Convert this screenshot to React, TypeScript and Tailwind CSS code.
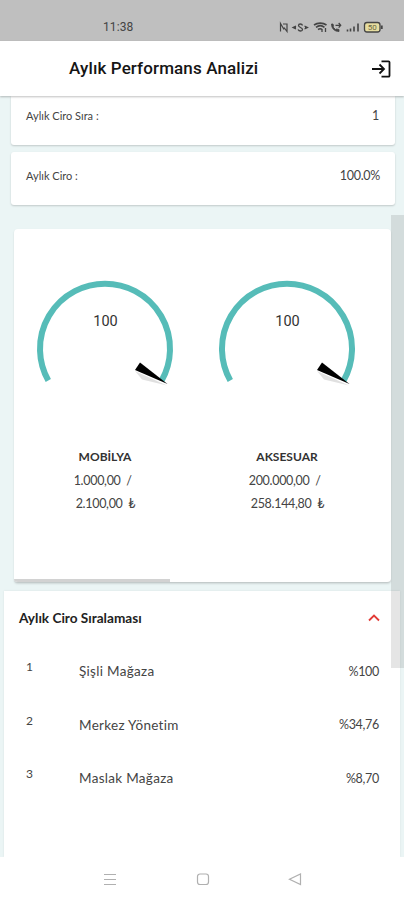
interface Gauge {
  label: string;
  value: number;
  current: string;
  target: string;
}

interface Store {
  rank: number;
  name: string;
  share: string;
}

const gauges: Gauge[] = [
  { label: "MOBİLYA", value: 100, current: "1.000,00", target: "2.100,00" },
  { label: "AKSESUAR", value: 100, current: "200.000,00", target: "258.144,80" },
];

const stores: Store[] = [
  { rank: 1, name: "Şişli Mağaza", share: "%100" },
  { rank: 2, name: "Merkez Yönetim", share: "%34,76" },
  { rank: 3, name: "Maslak Mağaza", share: "%8,70" },
];

export default function App() {
  return (
    <div className="relative flex h-[900px] w-[404px] flex-col overflow-hidden bg-[#ebf5f5] font-['Lato','Noto_Sans',sans-serif] text-[#444]">
      <StatusBar />
      <Header />

      <main className="flex h-[761px] flex-col">
        <SummaryCard label="Aylık Ciro Sıra :" value="1" className="h-[49px] rounded-b-[3px] pr-4 pb-[9px]" />
        <SummaryCard label="Aylık Ciro :" value="100.0%" className="mt-[7px] h-[53px] rounded-[3px] pr-[15px] pb-[5px]" />

        {/* Gauges */}
        <section className="mt-6 ml-[14px] flex h-[354px] w-[377px] flex-col overflow-hidden rounded-[4px] border-b border-[#c3cbcb] bg-white shadow-[0_1px_2px_rgba(0,0,0,0.12)]">
          <div className="flex flex-1">
            {gauges.map((gauge) => (
              <GaugePanel key={gauge.label} gauge={gauge} />
            ))}
          </div>
          <div className="h-[3px] w-[156px] bg-[#d2d2d2]" />
        </section>

        <Ranking />
      </main>

      <NavBar />

      {/* Page scrollbar thumb */}
      <div className="absolute top-[215px] right-0 h-[453px] w-[13px] bg-black/10" />
    </div>
  );
}

function StatusBar() {
  return (
    <div className="flex h-[41px] shrink-0 items-start justify-between bg-[#bfbfbf] pt-[19px] pr-[20px] pl-[103px] text-[#444]">
      <span className="font-['Roboto',sans-serif] text-[12px] leading-[17px] tracking-[0.1px]">11:38</span>
      <svg width="106" height="16" viewBox="278 19 106 16" fill="none" stroke="#444" strokeWidth="1.3">
        {/* NFC */}
        <path d="M280.500 31.500v-8l3.500 6M283 24h4v7.500l-3-4" strokeWidth="1.200" />
        {/* Vibrate */}
        <path d="M296 26l-3 1.500 3 1.500M304.500 26l3 1.500-3 1.500M294 27.500h2M305 27.500h2" />
        <path d="M302.500 25.500c-.5-2-4-2-4 0s4 2 4 4-3.500 2-4.500 0" />
        {/* Wi-Fi */}
        <path d="M314 25c3.500-2.500 9-2.500 12.500 0M316 27.300c2.500-2 6-2 8.500 0M318 29.500c1.500-1 3-1 4 0" strokeWidth="1.600" />
        <path d="M322 29v3M325.500 28v4" />
        {/* Call */}
        <path d="M331.500 24c0 4.500 3 7.500 7.500 7.500v-2l-2.500-.500-1 .500-2.500-2.500.500-1-.5-2z" fill="#444" strokeWidth="0.800" />
        <path d="M335.500 25.300h5M338.700 23l2 2.300-2 2.300" />
        {/* Signal */}
        <path d="M347.500 31.500v-2M350.500 31.500v-3M354 31.500v-5M358 31.500v-8" strokeWidth="1.600" />
        {/* Battery */}
        <rect x="364.500" y="22.500" width="15.500" height="9.500" rx="2.500" fill="#e6dda0" />
        <path d="M381.800 25.500v3.500" strokeWidth="1.800" />
        <text
          x="372.300"
          y="30"
          textAnchor="middle"
          fill="#6b6540"
          stroke="none"
          className="font-['Roboto',sans-serif] text-[8px]"
        >
          50
        </text>
      </svg>
    </div>
  );
}

function Header() {
  return (
    <header className="z-10 flex h-[55px] shrink-0 items-center justify-between bg-white pr-[11px] pl-[69px] shadow-[0_1px_2px_rgba(0,0,0,0.25)]">
      <h1 className="font-['Roboto',sans-serif] text-[17px] font-medium tracking-[0.12px] whitespace-nowrap text-[#151515]">
        Aylık Performans Analizi
      </h1>
      <svg width="22" height="20" viewBox="0 0 22 20" fill="none" stroke="#111" strokeWidth="1.800">
        <path d="M1 10h12M8.500 5.500 13 10l-4.500 4.500" />
        <path d="M10.500 2.300H17.500a1 1 0 0 1 1 1v13.400a1 1 0 0 1-1 1h-7" />
      </svg>
    </header>
  );
}

function SummaryCard({ label, value, className }: { label: string; value: string; className: string }) {
  return (
    <div
      className={`mx-[11px] flex w-[384px] shrink-0 items-center justify-between bg-white pl-[15px] shadow-[0_1px_2px_rgba(0,0,0,0.18)] ${className}`}
    >
      <span className="text-[11px]">{label}</span>
      <span className="text-[12.500px] tracking-[-0.3px]">{value}</span>
    </div>
  );
}

function GaugePanel({ gauge }: { gauge: Gauge }) {
  return (
    <div className="flex w-[182px] shrink-0 flex-col items-center pt-[41px]">
      <svg width="150" height="130" viewBox="0 0 150 130">
        <path d="M18.300 110.500A65 65 0 1 1 131.700 110.500" fill="none" stroke="#56bcb8" strokeWidth="6" />
        <path d="M105 101l32 14.500-25-6z" fill="#000" opacity="0.120" />
        <path d="M110 92.500l27.500 21.500L105 100z" fill="#000" />
        <text
          x="75.500"
          y="55.500"
          textAnchor="middle"
          fill="#333"
          className="font-['Roboto',sans-serif] text-[14.500px]"
        >
          {gauge.value}
        </text>
      </svg>
      <p className="mt-[46px] text-[12px] leading-[22px] font-bold text-[#333]">{gauge.label}</p>
      <div className="pt-px text-[12.500px] leading-[23px] tracking-[-0.3px] whitespace-pre">
        <p className="-ml-px">{gauge.current}{"  /"}</p>
        <p className="pl-px">{gauge.target}{"  ₺"}</p>
      </div>
    </div>
  );
}

function Ranking() {
  return (
    <section className="mx-1 mt-2 flex-1 bg-white pr-[21px] pl-[15px] shadow-[0_0_2px_rgba(0,0,0,0.08)]">
      <div className="flex h-[54px] items-center justify-between">
        <h2 className="text-[13.600px] font-bold text-[#222]">Aylık Ciro Sıralaması</h2>
        <svg width="12" height="8" viewBox="0 0 12 8" fill="none" stroke="#e23b36" strokeWidth="1.800" className="-mr-px">
          <path d="M1 6.500l5-5 5 5" />
        </svg>
      </div>
      <ul>
        {stores.map((store) => (
          <li key={store.rank} className="flex h-[53.500px] items-center pl-[7px] text-[13.500px]">
            <span className="w-[53px] pb-[9px] text-[12px]">{store.rank}</span>
            <span className="flex-1 pb-px tracking-[0.3px] [font-variant-ligatures:none]">{store.name}</span>
            <span className="pt-px text-[12.500px] tracking-[-0.3px]">{store.share}</span>
          </li>
        ))}
      </ul>
    </section>
  );
}

function NavBar() {
  return (
    <nav className="flex h-[43px] shrink-0 items-center bg-white pl-[103px]">
      <svg width="200" height="14" viewBox="0 0 200 14" fill="none" stroke="#b0b0b0" strokeWidth="1.200">
        <path d="M1 2.500h12M1 7.500h12M1 12.500h12" />
        <rect x="94.500" y="2" width="11" height="10.500" rx="2.500" />
        <path d="M197.500 2v10.500L186.500 7.200z" />
      </svg>
    </nav>
  );
}
